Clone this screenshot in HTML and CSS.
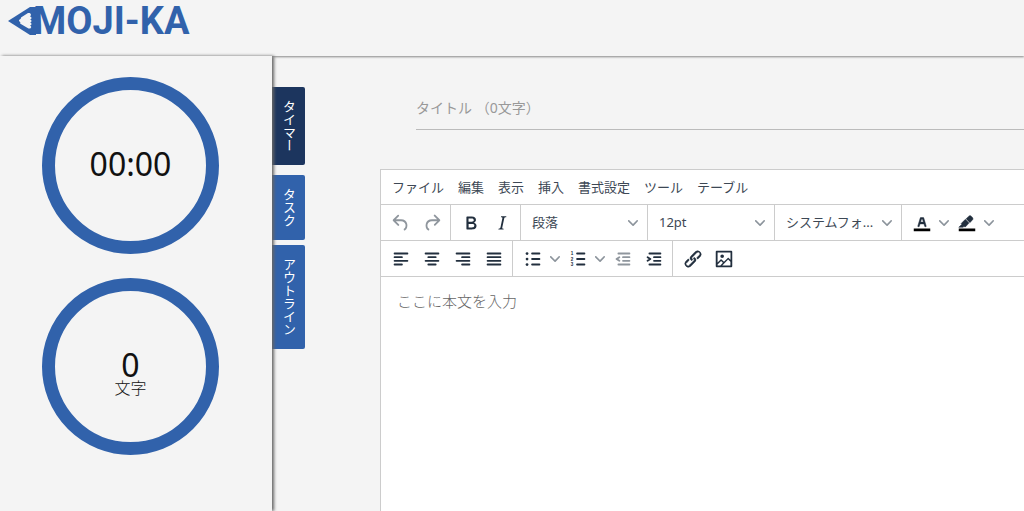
FILE: index.html
```html
<!DOCTYPE html>
<html lang="ja">
<head>
<meta charset="utf-8">
<meta name="viewport" content="width=device-width, initial-scale=1">
<title>MOJI-KA</title>
<link rel="stylesheet" href="styles.css">
</head>
<body>
<svg class="defs" aria-hidden="true">
  <symbol id="chevron" viewBox="0 0 10 10"><path d="M8.7 2.2c.3-.3.8-.3 1 0 .4.4.4.9 0 1.2L5.7 7.8c-.3.3-.9.3-1.2 0L.2 3.4a.8.8 0 010-1.2c.3-.3.8-.3 1.1 0L5 6l3.7-3.8z"/></symbol>
</svg>
<header class="header">
  <a class="logo" href="#">
    <svg class="logo-pencil" viewBox="0 0 28 28" aria-hidden="true">
      <path class="logo-body" d="M0 14 22 0H28V28H22Z"/>
      <path class="logo-wood" d="M13 10.500 20 6C22.500 5.500 24 7.500 22 9.500C24 10 24 12 22 12.500C24 13 24 15 22 15.500C24 16 24 18 22 18.500C24 19.500 23.500 22 20.500 21.500L12 16.500C13.500 15.500 11 14.500 11 13.500C11 12.500 13.500 12 13 10.500Z"/>
    </svg>
    <span class="logo-text">MOJI-KA</span>
  </a>
</header>
<div class="workspace">
  <aside class="sidebar">
    <div class="dial"><span class="dial-value">00:00</span></div>
    <div class="dial"><span class="dial-value">0</span><span class="dial-unit">文字</span></div>
  </aside>
  <nav class="tabs">
    <button class="tab tab-active" type="button">タイマー</button>
    <button class="tab" type="button">タスク</button>
    <button class="tab" type="button">アウトライン</button>
  </nav>
  <main class="content">
    <input class="title-input" type="text" placeholder="タイトル （0文字）" aria-label="タイトル">
    <section class="editor">
      <div class="menubar">
        <button type="button">ファイル</button>
        <button type="button">編集</button>
        <button type="button">表示</button>
        <button type="button">挿入</button>
        <button type="button">書式設定</button>
        <button type="button">ツール</button>
        <button type="button">テーブル</button>
      </div>
      <div class="toolbar">
        <div class="group">
          <button class="tool disabled" type="button" aria-label="元に戻す"><svg viewBox="0 0 24 24"><path d="M6.4 8H12c3.7 0 6.2 2 6.8 5.1.6 2.7-.4 5.6-2.3 6.8a1 1 0 01-1-1.8c1.1-.6 1.8-2.7 1.4-4.6-.5-2.1-2.1-3.5-4.9-3.5H6.4l3.3 3.3a1 1 0 11-1.4 1.4l-5-5a1 1 0 010-1.4l5-5a1 1 0 011.4 1.4L6.4 8z"/></svg></button>
          <button class="tool disabled" type="button" aria-label="やり直し"><svg viewBox="0 0 24 24"><path d="M17.6 10H12c-2.8 0-4.4 1.4-4.9 3.5-.4 2 .3 4 1.4 4.6a1 1 0 11-1 1.8c-2-1.2-2.9-4.1-2.3-6.8.6-3 3-5.1 6.8-5.1h5.6l-3.3-3.3a1 1 0 111.4-1.4l5 5a1 1 0 010 1.4l-5 5a1 1 0 01-1.4-1.4l3.3-3.3z"/></svg></button>
        </div>
        <div class="group">
          <button class="tool" type="button" aria-label="太字"><svg viewBox="0 0 24 24"><path d="M7.800 19c-.3 0-.5 0-.6-.2l-.2-.5V5.700c0-.2 0-.4.2-.5l.6-.2h5c1.500 0 2.700.3 3.500 1 .7.6 1.100 1.400 1.100 2.500a3 3 0 01-.6 1.900c-.4.6-1 1-1.600 1.200.4.1.9.3 1.300.6s.8.7 1 1.200c.4.4.5 1 .5 1.600 0 1.300-.4 2.300-1.300 3-.8.7-2.100 1-3.800 1H7.800zm5-8.300c.6 0 1.200-.1 1.600-.5.4-.3.6-.7.6-1.300 0-1.100-.8-1.700-2.300-1.700H9.300v3.500h3.400zm.5 6c.7 0 1.300-.1 1.700-.4.4-.4.6-.9.6-1.500s-.2-1-.7-1.400c-.4-.3-1-.4-2-.4H9.400v3.800h4z" fill-rule="evenodd"/></svg></button>
          <button class="tool" type="button" aria-label="斜体"><svg viewBox="0 0 24 24"><path d="M16.7 4.7l-.1.9h-.3c-.6 0-1 0-1.4.3-.3.3-.4.6-.5 1.100l-2.100 9.800v.6c0 .5.4.8 1.400.8h.2l-.2.8H8l.2-.8h.2c1.100 0 1.800-.5 2-1.500l2-9.800.1-.5c0-.6-.4-.8-1.400-.8h-.3l.2-.9h5.800z"/></svg></button>
        </div>
        <div class="group">
          <span class="picker"><select aria-label="ブロック"><option>段落</option></select><svg class="chevron"><use href="#chevron"/></svg></span>
        </div>
        <div class="group">
          <span class="picker"><select aria-label="フォントサイズ"><option>12pt</option></select><svg class="chevron"><use href="#chevron"/></svg></span>
        </div>
        <div class="group">
          <span class="picker"><select aria-label="フォント"><option>システムフォ...</option></select><svg class="chevron"><use href="#chevron"/></svg></span>
        </div>
        <div class="group">
          <button class="tool" type="button" aria-label="テキストの色"><svg viewBox="0 0 24 24"><path class="swatch" d="M3 18h18v3H3z"/><path class="bold-glyph" fill-rule="evenodd" d="M8.7 16h-.8a.5.5 0 01-.5-.6l2.700-9c.1-.3.3-.4.5-.4h2.800c.2 0 .4.1.5.4l2.700 9a.5.5 0 01-.5.6h-.8a.5.5 0 01-.4-.4l-.7-2.200c0-.3-.3-.4-.5-.4h-3.400c-.2 0-.4.1-.5.4l-.7 2.200c0 .3-.2.4-.4.4zm2.600-7.600l-.6 2a.5.5 0 00.5.6h1.600a.5.5 0 00.5-.6l-.6-2c0-.3-.3-.4-.5-.4h-.4c-.2 0-.4.1-.5.4z"/></svg></button>
          <button class="more" type="button" aria-label="テキストの色を選択"><svg class="chevron"><use href="#chevron"/></svg></button>
          <button class="tool" type="button" aria-label="背景色"><svg viewBox="0 0 24 24"><path class="swatch" d="M3 18h18v3H3z"/><path class="bold-glyph" d="M7.7 16.7H3l3.300-3.300-.7-.8L10.200 8l4 4.100-4 4.200c-.2.2-.6.2-.8 0l-.6-.7-1.100 1.100zm5-7.500L11 7.400l3-2.900a2 2 0 012.600 0L18 6c.7.7.7 2 0 2.700l-2.900 2.900-1.800-1.800-.5-.6"/></svg></button>
          <button class="more" type="button" aria-label="背景色を選択"><svg class="chevron"><use href="#chevron"/></svg></button>
        </div>
      </div>
      <div class="toolbar">
        <div class="group">
          <button class="tool" type="button" aria-label="左揃え"><svg class="lines" viewBox="0 0 24 24"><path d="M5 6H19M5 10H13M5 14H19M5 18H13"/></svg></button>
          <button class="tool" type="button" aria-label="中央揃え"><svg class="lines" viewBox="0 0 24 24"><path d="M5 6H19M8 10H16M5 14H19M8 18H16"/></svg></button>
          <button class="tool" type="button" aria-label="右揃え"><svg class="lines" viewBox="0 0 24 24"><path d="M5 6H19M11 10H19M5 14H19M11 18H19"/></svg></button>
          <button class="tool" type="button" aria-label="両端揃え"><svg class="lines" viewBox="0 0 24 24"><path d="M5 6H19M5 10H19M5 14H19M5 18H19"/></svg></button>
        </div>
        <div class="group">
          <button class="tool" type="button" aria-label="箇条書き"><svg class="lines" viewBox="0 0 24 24"><path d="M11 6H19M11 12H19M11 18H19"/><g class="solid"><circle cx="5.500" cy="6" r="1.500"/><circle cx="5.500" cy="12" r="1.500"/><circle cx="5.500" cy="18" r="1.500"/></g></svg></button>
          <button class="more" type="button" aria-label="箇条書きの種類"><svg class="chevron"><use href="#chevron"/></svg></button>
          <button class="tool" type="button" aria-label="番号付きリスト"><svg class="lines" viewBox="0 0 24 24"><path d="M11 6H19M11 12H19M11 18H19"/><g class="numerals"><text x="4" y="8">1</text><text x="4" y="14">2</text><text x="4" y="20">3</text></g></svg></button>
          <button class="more" type="button" aria-label="番号の種類"><svg class="chevron"><use href="#chevron"/></svg></button>
          <button class="tool disabled" type="button" aria-label="インデント解除"><svg class="lines" viewBox="0 0 24 24"><path d="M7 6H19M12 10H19M12 14H19M7 18H19M8 10 5 12 8 14"/></svg></button>
          <button class="tool" type="button" aria-label="インデント"><svg class="lines" viewBox="0 0 24 24"><path d="M7 6H19M12 10H19M12 14H19M7 18H19M5 10 8 12 5 14"/></svg></button>
        </div>
        <div class="group">
          <button class="tool" type="button" aria-label="リンク"><svg viewBox="0 0 24 24"><path class="bold-glyph" d="M6.2 12.3a1 1 0 011.4 1.4l-2.1 2a2 2 0 102.7 2.8l4.800-4.800a1 1 0 000-1.400 1 1 0 111.400-1.300 2.900 2.900 0 010 4L9.600 20a3.900 3.900 0 01-5.500-5.500l2-2zm11.600-.6a1 1 0 01-1.400-1.400l2-2a2 2 0 10-2.600-2.800L11 10.300a1 1 0 000 1.400A1 1 0 119.600 13a2.900 2.900 0 010-4L14.400 4a3.900 3.900 0 015.500 5.500l-2 2z"/></svg></button>
          <button class="tool" type="button" aria-label="画像"><svg viewBox="0 0 24 24"><path fill-rule="evenodd" d="M5 15.700l3.300-3.200c.3-.3.7-.3 1 0L12 15l4.100-4c.3-.4.8-.4 1 0l2 1.900V5H5v10.700zM5 18V19h3l2.800-2.900-2-2L5 17.900zm14-3l-2.500-2.400-6.400 6.500H19v-4zM4 3h16c.6 0 1 .4 1 1v16c0 .6-.4 1-1 1H4a1 1 0 01-1-1V4c0-.6.4-1 1-1zm6 8a2 2 0 100-4 2 2 0 000 4z"/></svg></button>
        </div>
      </div>
      <textarea class="body-input" placeholder="ここに本文を入力" aria-label="本文"></textarea>
    </section>
  </main>
</div>
</body>
</html>
```
FILE: styles.css
```css
* { box-sizing: border-box; }
body {
  margin: 0;
  min-height: 100vh;
  display: flex;
  flex-direction: column;
  background: #f4f4f4;
  color: #222f3e;
  font-family: "Noto Sans", "Noto Sans CJK JP", sans-serif;
  font-size: 13px;
}
button, select, input, textarea {
  margin: 0;
  padding: 0;
  border: 0;
  background: none;
  color: inherit;
  font: inherit;
}
.defs { position: absolute; width: 0; height: 0; }

.header {
  height: 56px;
  flex: none;
  padding: 7px 8px;
  box-shadow: 0 1px 2px #888;
}
.logo {
  display: flex;
  align-items: center;
  width: max-content;
  color: #3162ab;
  text-decoration: none;
}
.logo-pencil { width: 28px; height: 28px; }
.logo-body { fill: #3162ab; }
.logo-wood { fill: #f4f4f4; }
.logo-text {
  margin-left: -3px;
  font-family: Roboto, sans-serif;
  font-size: 38px;
  font-weight: 700;
  line-height: 28px;
}

.workspace { flex: 1; display: flex; }
.sidebar {
  position: relative;
  z-index: 1;
  flex: none;
  width: 272px;
  display: flex;
  flex-direction: column;
  gap: 24px;
  padding: 21px 42px;
  background: #f4f4f4;
  box-shadow: 2px 0 3px #666;
}
.dial {
  width: 177px;
  height: 177px;
  display: flex;
  flex-direction: column;
  align-items: center;
  justify-content: center;
  padding-bottom: 3px;
  border: 13px solid #3162ab;
  border-radius: 50%;
  color: #111;
}
.dial-value { font-size: 32px; line-height: 24px; }
.dial-unit {
  font-size: 16px;
  font-weight: 300;
  line-height: 22px;
}
.dial:nth-child(2) { padding: 18px 0 0; }

.tabs {
  flex: none;
  width: 33px;
  display: flex;
  flex-direction: column;
  gap: 5px;
  padding-top: 31px;
}
.tab {
  padding: 13px 0;
  border-radius: 0 2px 2px 0;
  background: #3162ab;
  color: #fff;
  line-height: 33px;
  writing-mode: vertical-rl;
}
.tab-active { margin-bottom: 5px; background: #1c355e; }

.content {
  flex: 1;
  min-width: 0;
  display: flex;
  flex-direction: column;
  gap: 39px;
  padding: 31px 0 0 75px;
}
.title-input {
  height: 43px;
  margin-left: 36px;
  padding-bottom: 2px;
  border-bottom: 1px solid #bbb;
  font-size: 14px;
  outline: none;
}
.title-input::placeholder { color: #999; opacity: 1; }

.editor {
  flex: 1;
  display: flex;
  flex-direction: column;
  border: 1px solid #ccc;
  border-width: 1px 0 0 1px;
  background: #fff;
}
.menubar {
  display: flex;
  gap: 14px;
  height: 34px;
  padding: 0 11px 2px;
  color: #3d4855;
}
.toolbar { display: flex; height: 36px; border-top: 1px solid #ccc; }
.group {
  display: flex;
  align-items: center;
  padding: 0 3px 0 4px;
  border-right: 1px solid #ccc;
}
.toolbar:nth-child(2) .group:last-child { border-right: 0; }
.toolbar:nth-child(3) .group:last-child { border-right: 0; }
.tool {
  display: flex;
  align-items: center;
  justify-content: center;
  width: 31px;
  height: 31px;
}
.tool svg { width: 22px; height: 22px; fill: #222f3e; }
.tool .swatch { fill: #000; }
.bold-glyph { stroke: #222f3e; stroke-width: 0.5; }
.tool .lines { fill: none; stroke: #222f3e; stroke-width: 2; stroke-linecap: round; stroke-linejoin: round; }
.lines .solid { fill: #222f3e; stroke: none; }
.lines .numerals {
  fill: #222f3e;
  stroke: none;
  font-family: "Liberation Sans", sans-serif;
  font-size: 5px;
  font-weight: 700;
}
.disabled { opacity: 0.5; }
.more {
  display: flex;
  align-items: center;
  justify-content: center;
  width: 14px;
  height: 31px;
}
.chevron, .more .chevron { width: 10px; height: 10px; fill: #8c949c; }
.picker { position: relative; display: flex; align-items: center; width: 119px; }
.picker select {
  appearance: none;
  width: 100%;
  height: 31px;
  padding: 0 24px 2px 7px;
  color: #3d4855;
}
.picker .chevron { position: absolute; right: 6px; pointer-events: none; }
.body-input {
  flex: 1;
  padding: 13px 16px;
  border-top: 1px solid #ccc;
  font-size: 15px;
  line-height: 22px;
  resize: none;
  outline: none;
}
.body-input::placeholder { color: #666; opacity: 1; font-weight: 300; }
```
